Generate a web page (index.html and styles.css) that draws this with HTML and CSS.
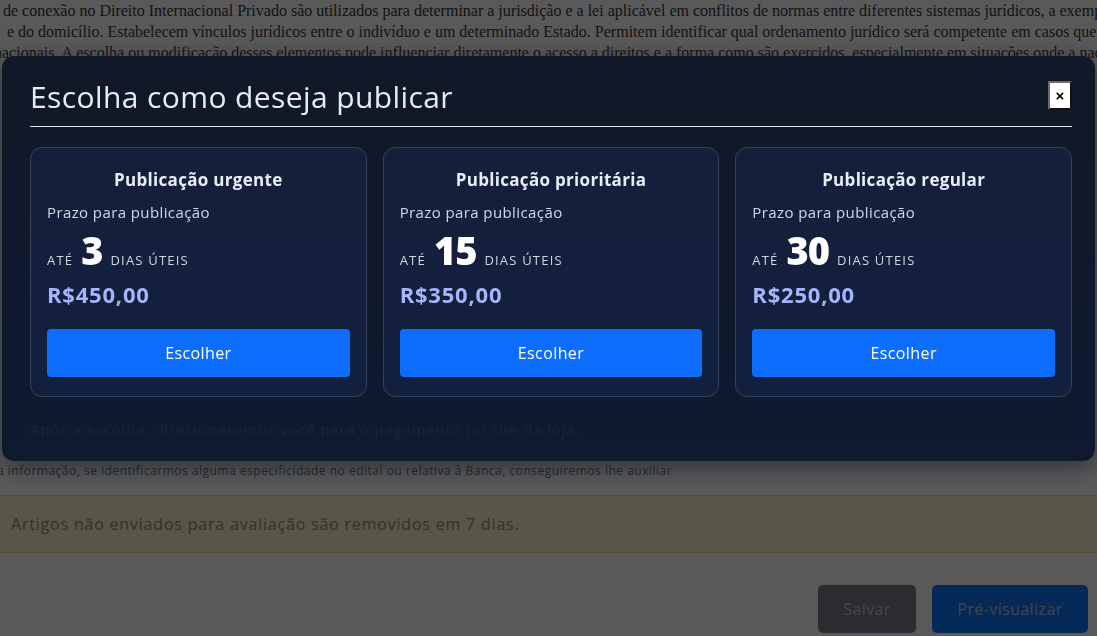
FILE: index.html
```html
<!DOCTYPE html>
<html lang="pt-BR">
  <head>
    <meta charset="UTF-8" />
    <meta name="viewport" content="width=device-width, initial-scale=1.0" />
    <title>Escolha como deseja publicar</title>
    <link rel="stylesheet" href="styles.css">
  </head>
  <body>
    <main class="page">
      <!-- Article text (behind the modal) -->
      <div class="article">
        <p>de conexão no Direito Internacional Privado são utilizados para determinar a jurisdição e a lei aplicável em conflitos de normas entre diferentes sistemas jurídicos, a exemplo da nacionalidade</p>
        <p>&nbsp;e do domicílio. Estabelecem vínculos jurídicos entre o indivíduo e um determinado Estado. Permitem identificar qual ordenamento jurídico será competente em casos que envolvem</p>
        <p class="cut">nacionais. A escolha ou modificação desses elementos pode influenciar diretamente o acesso a direitos e a forma como são exercidos, especialmente em situações onde a nacionalidade</p>
      </div>

      <p class="help-text">a informação, se identificarmos alguma especificidade no edital ou relativa à Banca, conseguiremos lhe auxiliar</p>

      <div class="alert">Artigos não enviados para avaliação são removidos em 7 dias.</div>

      <div class="actions">
        <button class="btn btn-save">Salvar</button>
        <button class="btn btn-preview">Pré-visualizar</button>
      </div>
    </main>

    <!-- Modal -->
    <div class="overlay"></div>
    <div class="modal">
      <div class="modal-header">
        <h1>Escolha como deseja publicar</h1>
        <button class="close-btn">×</button>
      </div>

      <div class="plans">
        <div class="plan">
          <h2>Publicação urgente</h2>
          <p class="plan-label">Prazo para publicação</p>
          <div class="plan-days"><span>Até</span><strong>3</strong><span>dias úteis</span></div>
          <p class="plan-price">R$450,00</p>
          <button class="choose-btn">Escolher</button>
        </div>
        <div class="plan">
          <h2>Publicação prioritária</h2>
          <p class="plan-label">Prazo para publicação</p>
          <div class="plan-days"><span>Até</span><strong>15</strong><span>dias úteis</span></div>
          <p class="plan-price">R$350,00</p>
          <button class="choose-btn">Escolher</button>
        </div>
        <div class="plan">
          <h2>Publicação regular</h2>
          <p class="plan-label">Prazo para publicação</p>
          <div class="plan-days"><span>Até</span><strong>30</strong><span>dias úteis</span></div>
          <p class="plan-price">R$250,00</p>
          <button class="choose-btn">Escolher</button>
        </div>
      </div>

      <p class="modal-note">Após a escolha, direcionaremos você para o pagamento no site da loja.</p>
    </div>
  </body>
</html>
```

FILE: styles.css
```css
body {
  margin: 0;
  padding: 0;
  background-color: #ffffff;
  font-family: "Open Sans", Arial, sans-serif;
  overflow: hidden;
  height: 636px;
}

/* Page behind the modal */
.page {
  display: flex;
  flex-direction: column;
}

.article {
  height: 462px;
  overflow: hidden;
  padding-left: 3px;
}

.article p {
  margin: 0;
  font-family: "Liberation Serif", "Times New Roman", serif;
  font-size: 16px;
  line-height: 21px;
  color: #3a3a3a;
  white-space: nowrap;
}

.article .cut {
  margin-left: -9px;
}

.help-text {
  margin: 0 0 0 -3px;
  height: 33px;
  font-size: 12px;
  line-height: 18px;
  letter-spacing: 0.5px;
  color: #6c757d;
  white-space: nowrap;
}

.alert {
  height: 56px;
  padding: 0 11px;
  display: flex;
  align-items: center;
  background-color: #fff3cd;
  border-top: 1px solid #e9d79c;
  border-bottom: 1px solid #e9d79c;
  color: #a88d5e;
  font-size: 16px;
  letter-spacing: 0.8px;
}

.actions {
  display: flex;
  justify-content: flex-end;
  gap: 16px;
  padding: 32px 9px 0 0;
}

.btn {
  height: 48px;
  border: none;
  border-radius: 5px;
  font-family: "Open Sans", Arial, sans-serif;
  font-size: 16px;
  letter-spacing: 0.4px;
  cursor: pointer;
}

.btn-save {
  width: 98px;
  background-color: #7b7e86;
  color: #c8cacd;
}

.btn-preview {
  width: 156px;
  background-color: #0f78fd;
  color: #b4c6e2;
}

/* Modal */
.overlay {
  position: fixed;
  inset: 0;
  background-color: rgba(0, 0, 0, 0.65);
}

.modal {
  position: fixed;
  top: 56px;
  left: 2px;
  width: 1093px;
  box-sizing: border-box;
  padding: 20px 23px 20px 28px;
  border-radius: 12px;
  background: linear-gradient(180deg, #111827 0%, #0f1a2f 100%);
  box-shadow: 0 6px 24px rgba(10, 14, 28, 0.55);
  color: #e6ecf5;
}

.modal-header {
  display: flex;
  justify-content: space-between;
  align-items: center;
  padding-bottom: 8px;
  border-bottom: 1px solid #dfe4ec;
}

.modal-header h1 {
  margin: 0;
  font-size: 30px;
  font-weight: 400;
  line-height: 42px;
  letter-spacing: 0.4px;
  color: #e6ecf5;
}

.close-btn {
  width: 24px;
  height: 29px;
  padding: 0;
  margin-top: -4px;
  background-color: #ffffff;
  border: 2px solid;
  border-color: #6b6b6b #111111 #111111 #6b6b6b;
  font-family: Arial, sans-serif;
  font-size: 15px;
  font-weight: bold;
  color: #000;
  cursor: pointer;
}

.plans {
  display: grid;
  grid-template-columns: repeat(3, 1fr);
  gap: 16px;
  margin-top: 20px;
}

.plan {
  padding: 20px 16px 19px;
  border: 1px solid #34425e;
  border-radius: 12px;
  background: linear-gradient(180deg, #151f3b 0%, #12203e 100%);
}

.plan h2 {
  margin: 0;
  text-align: center;
  font-size: 17px;
  font-weight: 700;
  line-height: 24px;
  letter-spacing: 0.3px;
  color: #e8edf5;
}

.plan-label {
  margin: 8px 0 0;
  font-size: 15px;
  line-height: 24px;
  letter-spacing: 0.4px;
  color: #d2d8e4;
}

.plan-days {
  display: flex;
  align-items: baseline;
  gap: 8px;
  margin-top: 4px;
  height: 44px;
  line-height: 44px;
}

.plan-days span {
  font-size: 13px;
  text-transform: uppercase;
  letter-spacing: 1.2px;
  color: #cfd5e1;
}

.plan-days strong {
  font-size: 38px;
  font-weight: 800;
  color: #ffffff;
  letter-spacing: -1px;
}

.plan-price {
  margin: 8px 0 0;
  font-size: 22px;
  font-weight: 700;
  line-height: 28px;
  letter-spacing: 0.8px;
  color: #a5b4fc;
}

.choose-btn {
  display: block;
  width: 100%;
  height: 48px;
  margin-top: 21px;
  border: none;
  border-radius: 4px;
  background-color: #0d6efd;
  color: #ffffff;
  font-family: "Open Sans", Arial, sans-serif;
  font-size: 16px;
  letter-spacing: 0.4px;
  cursor: pointer;
}

.modal-note {
  margin: 20px 0 0;
  font-size: 15px;
  line-height: 24px;
  letter-spacing: 0.8px;
  color: #1b2539;
}
```
